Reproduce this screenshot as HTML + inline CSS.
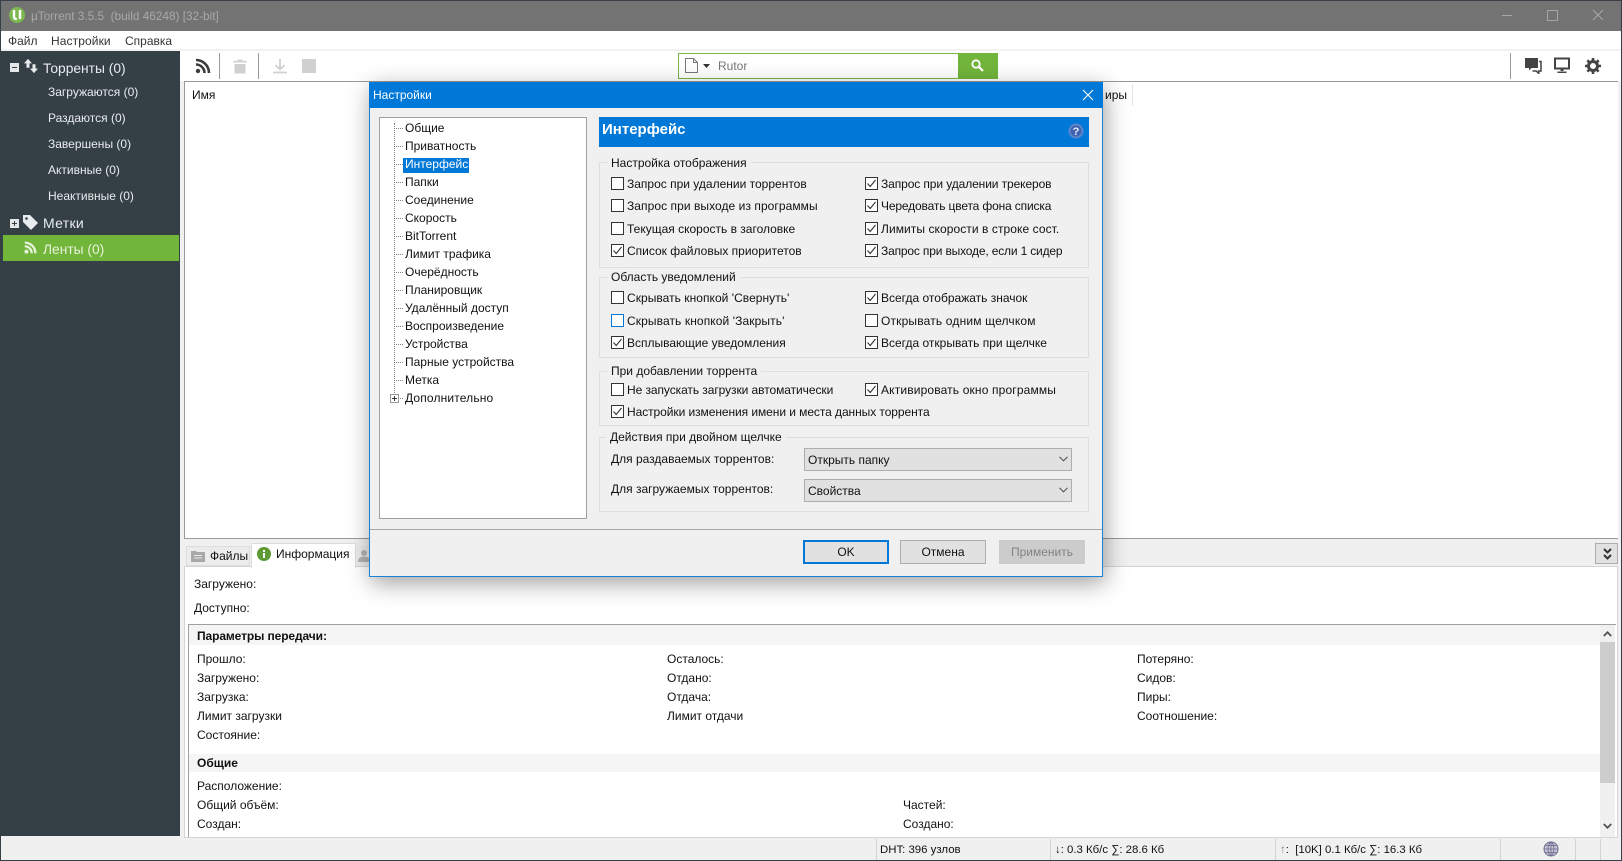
<!DOCTYPE html>
<html lang="ru"><head><meta charset="utf-8"><title>µTorrent</title>
<style>
html,body{margin:0;padding:0;width:1622px;height:861px;overflow:hidden;background:#f0f0f0}
body{position:relative;font:12px/16px "Liberation Sans","DejaVu Sans",sans-serif;color:#111}
div,i,svg{position:absolute;display:block}
.t{position:absolute;white-space:nowrap;line-height:16px;font-style:normal}
.w{color:#e8ecee}
.b{font-weight:bold}
.g{position:absolute;left:599px;width:488px;border:1px solid #dedede}
.lg{position:absolute;background:#f0f0f0;padding:0 4px;white-space:nowrap;line-height:16px;left:7px;top:-8px}
.lu{top:-9px}
.cb{position:absolute;width:13px;height:13px;background:#fff;border:1px solid #333;box-sizing:border-box}
.cb svg{left:0;top:0}
.combo{position:absolute;left:804px;width:268px;height:23px;background:#e1e1e1;border:1px solid #adadad;box-sizing:border-box}
.btn{position:absolute;top:540px;height:24px;width:86px;text-align:center;line-height:22px;background:#e1e1e1;border:1px solid #adadad;box-sizing:border-box}
.dot{position:absolute;border-top:1px dotted #808080;width:9px;left:394px}
.st{font-size:11.4px}
</style></head><body>

<!-- window frame -->
<div style="left:0;top:0;width:1622px;height:861px;background:#f0f0f0"></div>
<div style="left:0;top:0;width:1622px;height:31px;background:#737373"></div>
<div style="left:0;top:0;width:1622px;height:1px;background:#3c4048"></div>
<div style="left:0;top:31px;width:1622px;height:19px;background:#fff"></div>
<div style="left:0;top:50px;width:1622px;height:31px;background:#fff"></div>
<div style="left:0;top:49px;width:1622px;height:2px;background:#f2f2f2"></div>

<!-- title bar -->
<svg style="left:8px;top:6px" width="18" height="18" viewBox="0 0 18 18"><circle cx="9" cy="9" r="8" fill="#7cb850"/><path d="M6 4v6.500c0 1.600 1 2.500 2.800 2.500M12 4v9" fill="none" stroke="#fff" stroke-width="2.400"/></svg>
<span class="t" style="left:31px;top:8px;color:#a9a9a9;font-size:11.8px">µTorrent 3.5.5&nbsp; (build 46248) [32-bit]</span>
<div style="left:1502px;top:15px;width:10px;height:1px;background:#a6a6a6"></div>
<div style="left:1547px;top:10px;width:9px;height:9px;border:1px solid #a6a6a6"></div>
<svg style="left:1592px;top:9px" width="12" height="12" viewBox="0 0 12 12"><path d="M1 1L11 11M11 1L1 11" stroke="#a6a6a6" stroke-width="1.100"/></svg>

<!-- menu -->
<span class="t" style="left:8px;top:33px;color:#333">Файл</span>
<span class="t" style="left:51px;top:33px;color:#333;letter-spacing:.1px">Настройки</span>
<span class="t" style="left:125px;top:33px;color:#333">Справка</span>

<!-- toolbar -->
<svg style="left:195px;top:58px" width="16" height="16" viewBox="0 0 16 16"><circle cx="3" cy="13" r="2.200" fill="#3c3c3c"/><path d="M1 6.500a8.500 8.500 0 0 1 8.500 8.500M1 2a13 13 0 0 1 13 13" fill="none" stroke="#3c3c3c" stroke-width="2.600"/></svg>
<div style="left:219px;top:53px;width:1px;height:26px;background:#999"></div>
<svg style="left:232px;top:58px" width="16" height="16" viewBox="0 0 16 16"><path d="M1 3h14v1.500H1zM5.500 1.500h5V3h-5zM2.500 6h11v9.500h-11z" fill="#d0d0d0"/></svg>
<div style="left:258px;top:53px;width:1px;height:26px;background:#999"></div>
<svg style="left:272px;top:58px" width="16" height="16" viewBox="0 0 16 16"><path d="M8 1v9M3.500 7L8 11.500 12.500 7M1 14.500h14" fill="none" stroke="#d0d0d0" stroke-width="1.800"/></svg>
<div style="left:302px;top:59px;width:14px;height:14px;background:#d0d0d0"></div>

<!-- search -->
<div style="left:678px;top:53px;width:279px;height:24px;background:#fff;border:1px solid #7ab648"></div>
<div style="left:958px;top:53px;width:40px;height:26px;background:#72b53b"></div>
<svg style="left:971px;top:59px" width="13" height="13" viewBox="0 0 13 13"><circle cx="5" cy="5" r="3.700" fill="none" stroke="#fff" stroke-width="1.800"/><path d="M7.800 7.800L12 12" stroke="#fff" stroke-width="2.200"/></svg>
<svg style="left:685px;top:58px" width="13" height="15" viewBox="0 0 13 15"><path d="M.5.500h8l4 4v10H.5zM8.500.500v4h4" fill="#fff" stroke="#777"/></svg>
<svg style="left:703px;top:64px" width="7" height="4" viewBox="0 0 7 4"><path d="M0 0h7L3.500 4z" fill="#333"/></svg>
<span class="t" style="left:718px;top:58px;color:#777">Rutor</span>

<div style="left:1510px;top:53px;width:1px;height:26px;background:#999"></div>
<svg style="left:1525px;top:58px" width="17" height="16" viewBox="0 0 17 16"><path d="M0 0h13v10H6.500L4 12.500V10H0z" fill="#444"/><path d="M14 3.500h2v9.500h-2.200v2.500L11.300 13H7.500" fill="none" stroke="#444" stroke-width="1.500"/></svg>
<svg style="left:1554px;top:57px" width="16" height="16" viewBox="0 0 16 16"><path d="M1 1.500h14v10H1z" fill="none" stroke="#444" stroke-width="2"/><path d="M6.500 12h3v2h-3zM3.500 14.500h9V16h-9z" fill="#444"/></svg>
<svg style="left:1585px;top:58px" width="16" height="16" viewBox="0 0 16 16"><circle cx="8" cy="8" r="4.500" fill="none" stroke="#444" stroke-width="3"/><path d="M8 0v16M0 8h16M2.300 2.300l11.400 11.400M13.700 2.300L2.300 13.700" stroke="#444" stroke-width="2.600" stroke-dasharray="2.800 10.400 2.800"/></svg>

<!-- sidebar -->
<div style="left:0;top:51px;width:180px;height:785px;background:#343f46"></div>
<div style="left:0;top:0;width:1px;height:861px;background:#343f46"></div>
<div style="left:3px;top:235px;width:176px;height:26px;background:#72b53b"></div>
<div style="left:10px;top:63px;width:9px;height:9px;background:#e4e7e8"></div>
<div style="left:12px;top:67px;width:5px;height:1px;background:#343f46"></div>
<svg style="left:23px;top:58px" width="16" height="16" viewBox="0 0 16 18" preserveAspectRatio="none"><path d="M5 1l4 5H6.500v5h-3V6H1zM11 17l-4-5h2.500V7h3v5H15z" fill="#e8ecee"/></svg>
<span class="t w" style="left:43px;top:61px;font-size:13.800px">Торренты (0)</span>
<span class="t w" style="left:48px;top:84px">Загружаются (0)</span>
<span class="t w" style="left:48px;top:110px">Раздаются (0)</span>
<span class="t w" style="left:48px;top:136px">Завершены (0)</span>
<span class="t w" style="left:48px;top:162px">Активные (0)</span>
<span class="t w" style="left:48px;top:188px">Неактивные (0)</span>
<div style="left:10px;top:219px;width:9px;height:9px;background:#e4e7e8"></div>
<div style="left:12px;top:223px;width:5px;height:1px;background:#343f46"></div>
<div style="left:14px;top:221px;width:1px;height:5px;background:#343f46"></div>
<svg style="left:22px;top:214px" width="17" height="17" viewBox="0 0 17 17"><path d="M1 1h7l8 8-7 7-8-8z" fill="#e8ecee"/><circle cx="4.500" cy="4.500" r="1.300" fill="#343f46"/></svg>
<span class="t w" style="left:43px;top:215px;font-size:14px;letter-spacing:.3px">Метки</span>
<svg style="left:24px;top:241px" width="13" height="13" viewBox="0 0 16 16"><circle cx="3" cy="13" r="2.400" fill="#e8f3dc"/><path d="M1 6.500a8.500 8.500 0 0 1 8.500 8.500M1 2a13 13 0 0 1 13 13" fill="none" stroke="#e8f3dc" stroke-width="2.800"/></svg>
<span class="t" style="left:43px;top:242px;font-size:13.800px;color:#e8f3dc">Ленты (0)</span>

<!-- list -->
<div style="left:184px;top:81px;width:1434px;height:458px;background:#fff;border-top:1px solid #999;border-left:1px solid #999;border-bottom:1px solid #999;box-sizing:border-box"></div>
<span class="t" style="left:192px;top:87px">Имя</span>
<span class="t" style="left:1105px;top:87px">иры</span>
<div style="left:1132px;top:84px;width:1px;height:22px;background:#e4e4e4"></div>

<!-- tabs -->
<div style="left:186px;top:546px;width:64px;height:20px;background:#ececec;border:1px solid #ddd;box-sizing:border-box"></div>
<svg style="left:191px;top:549px" width="14" height="13" viewBox="0 0 14 13"><path d="M0 2h5l1 1h8v10H0z" fill="#a8a8a8"/><path d="M3 6.500h8M3 9h8" stroke="#e8e8e8"/></svg>
<span class="t" style="left:210px;top:548px">Файлы</span>
<div style="left:251px;top:543px;width:105px;height:25px;background:#fff;border:1px solid #ddd;border-bottom:none;box-sizing:border-box;z-index:2"></div>
<svg style="left:257px;top:547px;z-index:3" width="14" height="14" viewBox="0 0 14 14"><circle cx="7" cy="7" r="7" fill="#5b9a35"/><path d="M6 3h2v2H6zM6 6h2v5H6z" fill="#fff"/></svg>
<span class="t" style="left:276px;top:546px;z-index:3">Информация</span>
<div style="left:356px;top:546px;width:20px;height:20px;background:#ececec"></div>
<svg style="left:358px;top:549px" width="12" height="13" viewBox="0 0 12 13"><circle cx="6" cy="4" r="3" fill="#b4b4b4"/><path d="M0 13c0-4 2.500-5.500 6-5.500s6 1.500 6 5.500z" fill="#b4b4b4"/></svg>
<div style="left:1595px;top:543px;width:23px;height:21px;background:#e1e1e1;border:1px solid #adadad;box-sizing:border-box"></div>
<svg style="left:1603px;top:548px" width="10" height="12" viewBox="0 0 10 12"><path d="M1 1l3.500 3.500L8 1M1 7l3.500 3.500L8 7" fill="none" stroke="#333" stroke-width="2"/></svg>

<!-- info pane -->
<div style="left:184px;top:566px;width:1434px;height:272px;background:#fff;border:1px solid #d4d4d4;box-sizing:border-box"></div>
<span class="t" style="left:194px;top:576px">Загружено:</span>
<span class="t" style="left:194px;top:600px">Доступно:</span>
<div style="left:188px;top:624px;width:1428px;height:1px;background:#a0a0a0"></div>
<div style="left:188px;top:624px;width:1px;height:213px;background:#a0a0a0"></div>
<div style="left:189px;top:625px;width:1411px;height:20px;background:#f5f5f5"></div>
<div style="left:189px;top:754px;width:1411px;height:18px;background:#f5f5f5"></div>
<span class="t b" style="left:197px;top:628px;letter-spacing:-.1px">Параметры передачи:</span>
<span class="t" style="left:197px;top:651px">Прошло:</span>
<span class="t" style="left:197px;top:670px">Загружено:</span>
<span class="t" style="left:197px;top:689px">Загрузка:</span>
<span class="t" style="left:197px;top:708px">Лимит загрузки</span>
<span class="t" style="left:197px;top:727px">Состояние:</span>
<span class="t" style="left:667px;top:651px">Осталось:</span>
<span class="t" style="left:667px;top:670px">Отдано:</span>
<span class="t" style="left:667px;top:689px">Отдача:</span>
<span class="t" style="left:667px;top:708px">Лимит отдачи</span>
<span class="t" style="left:1137px;top:651px">Потеряно:</span>
<span class="t" style="left:1137px;top:670px">Сидов:</span>
<span class="t" style="left:1137px;top:689px">Пиры:</span>
<span class="t" style="left:1137px;top:708px">Соотношение:</span>
<span class="t b" style="left:197px;top:755px">Общие</span>
<span class="t" style="left:197px;top:778px">Расположение:</span>
<span class="t" style="left:197px;top:797px">Общий объём:</span>
<span class="t" style="left:197px;top:816px">Создан:</span>
<span class="t" style="left:903px;top:797px">Частей:</span>
<span class="t" style="left:903px;top:816px">Создано:</span>
<div style="left:1600px;top:625px;width:15px;height:212px;background:#f0f0f0"></div>
<div style="left:1600px;top:642px;width:15px;height:141px;background:#cdcdcd"></div>
<svg style="left:1603px;top:631px" width="9" height="6" viewBox="0 0 9 6"><path d="M.8 5L4.500 1.300 8.200 5" fill="none" stroke="#505050" stroke-width="1.800"/></svg>
<svg style="left:1603px;top:823px" width="9" height="6" viewBox="0 0 9 6"><path d="M.8 1L4.500 4.700 8.200 1" fill="none" stroke="#505050" stroke-width="1.800"/></svg>

<!-- status bar -->
<div style="left:0;top:860px;width:1622px;height:1px;background:#343f46"></div>
<div style="left:1621px;top:0;width:1px;height:861px;background:#343f46"></div>
<div style="left:876px;top:839px;width:1px;height:21px;background:#d4d4d4"></div>
<div style="left:1050px;top:839px;width:1px;height:21px;background:#d4d4d4"></div>
<div style="left:1275px;top:839px;width:1px;height:21px;background:#d4d4d4"></div>
<div style="left:1500px;top:839px;width:1px;height:21px;background:#d4d4d4"></div>
<div style="left:1575px;top:839px;width:1px;height:21px;background:#d4d4d4"></div>
<div style="left:1600px;top:839px;width:1px;height:21px;background:#d4d4d4"></div>
<span class="t st" style="left:880px;top:842px">DHT: 396 узлов</span>
<span class="t st" style="left:1055px;top:842px">↓: 0.3 Кб/с ∑: 28.6 Кб</span>
<span class="t st" style="left:1280px;top:842px"><span style="color:#888">↑</span>:&nbsp; [10K] 0.1 Кб/с ∑: 16.3 Кб</span>
<svg style="left:1543px;top:841px" width="16" height="16" viewBox="0 0 16 16"><circle cx="8" cy="8" r="7" fill="#c5c5d5" stroke="#6a6a90"/><path d="M8 1v14M1 8h14M2 4.500h12M2 11.500h12M8 1c-4 3-4 11 0 14M8 1c4 3 4 11 0 14" fill="none" stroke="#6a6a90" stroke-width=".8"/></svg>

<!-- dialog -->
<div style="left:369px;top:82px;width:734px;height:495px;background:#f0f0f0;border:1px solid #1883d7;box-sizing:border-box;box-shadow:2px 6px 22px rgba(0,0,0,.38);z-index:10">
</div>
<div style="left:0;top:0;width:1622px;height:861px;z-index:11" id="d">
<div style="left:369px;top:82px;width:734px;height:26px;background:#0078d7"></div>
<span class="t" style="left:373px;top:87px;color:#fff">Настройки</span>
<svg style="left:1082px;top:89px" width="12" height="12" viewBox="0 0 12 12"><path d="M1 1L11 11M11 1L1 11" stroke="#fff" stroke-width="1.100"/></svg>

<!-- tree -->
<div style="left:379px;top:117px;width:208px;height:402px;background:#fff;border:1px solid #a0a0a0;box-sizing:border-box"></div>
<div style="left:394px;top:123px;height:272px;border-left:1px dotted #808080"></div>
<div class="dot" style="top:128px"></div><span class="t" style="left:405px;top:120px">Общие</span>
<div class="dot" style="top:146px"></div><span class="t" style="left:405px;top:138px">Приватность</span>
<div class="dot" style="top:164px"></div>
<div style="left:403px;top:158px;width:66px;height:15px;background:#0078d7"></div><span class="t" style="left:405px;top:156px;color:#fff">Интерфейс</span>
<div class="dot" style="top:182px"></div><span class="t" style="left:405px;top:174px">Папки</span>
<div class="dot" style="top:200px"></div><span class="t" style="left:405px;top:192px">Соединение</span>
<div class="dot" style="top:218px"></div><span class="t" style="left:405px;top:210px">Скорость</span>
<div class="dot" style="top:236px"></div><span class="t" style="left:405px;top:228px">BitTorrent</span>
<div class="dot" style="top:254px"></div><span class="t" style="left:405px;top:246px">Лимит трафика</span>
<div class="dot" style="top:272px"></div><span class="t" style="left:405px;top:264px">Очерёдность</span>
<div class="dot" style="top:290px"></div><span class="t" style="left:405px;top:282px">Планировщик</span>
<div class="dot" style="top:308px"></div><span class="t" style="left:405px;top:300px">Удалённый доступ</span>
<div class="dot" style="top:326px"></div><span class="t" style="left:405px;top:318px">Воспроизведение</span>
<div class="dot" style="top:344px"></div><span class="t" style="left:405px;top:336px">Устройства</span>
<div class="dot" style="top:362px"></div><span class="t" style="left:405px;top:354px">Парные устройства</span>
<div class="dot" style="top:380px"></div><span class="t" style="left:405px;top:372px">Метка</span>
<div class="dot" style="top:398px"></div><span class="t" style="left:405px;top:390px;letter-spacing:.15px">Дополнительно</span>
<div style="left:390px;top:394px;width:7px;height:7px;background:#fff;border:1px solid #999"></div>
<div style="left:392px;top:398px;width:5px;height:1px;background:#333"></div>
<div style="left:394px;top:396px;width:1px;height:5px;background:#333"></div>

<!-- header -->
<div style="left:599px;top:117px;width:490px;height:30px;background:#0078d7"></div>
<span class="t b" style="left:602px;top:122px;color:#fff;font-size:15px">Интерфейс</span>
<svg style="left:1068px;top:123px" width="16" height="16" viewBox="0 0 16 16"><circle cx="8" cy="8" r="7.500" fill="#5d86c8"/><circle cx="8" cy="8" r="5.500" fill="#3f63b0"/><text x="8" y="12" text-anchor="middle" font-family="Liberation Sans" font-weight="bold" font-size="11" fill="#e6ecf8">?</text></svg>

<!-- group 1 -->
<div class="g" style="top:162px;height:104px"><span class="lg">Настройка отображения</span></div>
<div class="cb" style="left:611px;top:177px"></div><span class="t" style="left:627px;top:176px">Запрос при удалении торрентов</span>
<div class="cb" style="left:611px;top:199px"></div><span class="t" style="left:627px;top:198px;letter-spacing:.06px">Запрос при выходе из программы</span>
<div class="cb" style="left:611px;top:222px"></div><span class="t" style="left:627px;top:221px">Текущая скорость в заголовке</span>
<div class="cb" style="left:611px;top:244px"><svg width="11" height="11" viewBox="0 0 11 11"><path d="M1.500 5.500L4.200 8.500 9.500 2" fill="none" stroke="#333" stroke-width="1.100"/></svg></div><span class="t" style="left:627px;top:243px">Список файловых приоритетов</span>
<div class="cb" style="left:865px;top:177px"><svg width="11" height="11" viewBox="0 0 11 11"><path d="M1.500 5.500L4.200 8.500 9.500 2" fill="none" stroke="#333" stroke-width="1.100"/></svg></div><span class="t" style="left:881px;top:176px;letter-spacing:-.1px">Запрос при удалении трекеров</span>
<div class="cb" style="left:865px;top:199px"><svg width="11" height="11" viewBox="0 0 11 11"><path d="M1.500 5.500L4.200 8.500 9.500 2" fill="none" stroke="#333" stroke-width="1.100"/></svg></div><span class="t" style="left:881px;top:198px;letter-spacing:-.15px">Чередовать цвета фона списка</span>
<div class="cb" style="left:865px;top:222px"><svg width="11" height="11" viewBox="0 0 11 11"><path d="M1.500 5.500L4.200 8.500 9.500 2" fill="none" stroke="#333" stroke-width="1.100"/></svg></div><span class="t" style="left:881px;top:221px;letter-spacing:.07px">Лимиты скорости в строке сост.</span>
<div class="cb" style="left:865px;top:244px"><svg width="11" height="11" viewBox="0 0 11 11"><path d="M1.500 5.500L4.200 8.500 9.500 2" fill="none" stroke="#333" stroke-width="1.100"/></svg></div><span class="t" style="left:881px;top:243px;letter-spacing:-.17px">Запрос при выходе, если 1 сидер</span>

<!-- group 2 -->
<div class="g" style="top:277px;height:79px"><span class="lg lu">Область уведомлений</span></div>
<div class="cb" style="left:611px;top:291px"></div><span class="t" style="left:627px;top:290px;letter-spacing:.04px">Скрывать кнопкой 'Свернуть'</span>
<div class="cb" style="left:611px;top:314px;border-color:#0078d7"></div><span class="t" style="left:627px;top:313px;letter-spacing:.1px">Скрывать кнопкой 'Закрыть'</span>
<div class="cb" style="left:611px;top:336px"><svg width="11" height="11" viewBox="0 0 11 11"><path d="M1.500 5.500L4.200 8.500 9.500 2" fill="none" stroke="#333" stroke-width="1.100"/></svg></div><span class="t" style="left:627px;top:335px">Всплывающие уведомления</span>
<div class="cb" style="left:865px;top:291px"><svg width="11" height="11" viewBox="0 0 11 11"><path d="M1.500 5.500L4.200 8.500 9.500 2" fill="none" stroke="#333" stroke-width="1.100"/></svg></div><span class="t" style="left:881px;top:290px">Всегда отображать значок</span>
<div class="cb" style="left:865px;top:314px"></div><span class="t" style="left:881px;top:313px;letter-spacing:.17px">Открывать одним щелчком</span>
<div class="cb" style="left:865px;top:336px"><svg width="11" height="11" viewBox="0 0 11 11"><path d="M1.500 5.500L4.200 8.500 9.500 2" fill="none" stroke="#333" stroke-width="1.100"/></svg></div><span class="t" style="left:881px;top:335px">Всегда открывать при щелчке</span>

<!-- group 3 -->
<div class="g" style="top:371px;height:53px"><span class="lg lu">При добавлении торрента</span></div>
<div class="cb" style="left:611px;top:383px"></div><span class="t" style="left:627px;top:382px;letter-spacing:-.07px">Не запускать загрузки автоматически</span>
<div class="cb" style="left:865px;top:383px"><svg width="11" height="11" viewBox="0 0 11 11"><path d="M1.500 5.500L4.200 8.500 9.500 2" fill="none" stroke="#333" stroke-width="1.100"/></svg></div><span class="t" style="left:881px;top:382px;letter-spacing:.15px">Активировать окно программы</span>
<div class="cb" style="left:611px;top:405px"><svg width="11" height="11" viewBox="0 0 11 11"><path d="M1.500 5.500L4.200 8.500 9.500 2" fill="none" stroke="#333" stroke-width="1.100"/></svg></div><span class="t" style="left:627px;top:404px;letter-spacing:-.07px">Настройки изменения имени и места данных торрента</span>

<!-- group 4 -->
<div class="g" style="top:437px;height:73px"><span class="lg lu" style="left:6px">Действия при двойном щелчке</span></div>
<span class="t" style="left:611px;top:451px">Для раздаваемых торрентов:</span>
<span class="t" style="left:611px;top:481px">Для загружаемых торрентов:</span>
<div class="combo" style="top:448px"><span class="t" style="left:3px;top:3px">Открыть папку</span><svg style="left:254px;top:7px" width="9" height="6" viewBox="0 0 9 6"><path d="M.5 .8L4.500 4.800 8.500 .8" fill="none" stroke="#444"/></svg></div>
<div class="combo" style="top:479px"><span class="t" style="left:3px;top:3px">Свойства</span><svg style="left:254px;top:7px" width="9" height="6" viewBox="0 0 9 6"><path d="M.5 .8L4.500 4.800 8.500 .8" fill="none" stroke="#444"/></svg></div>

<!-- footer -->
<div style="left:370px;top:529px;width:732px;height:1px;background:#a8a8a8"></div>
<div class="btn" style="left:803px;border:2px solid #0078d7;line-height:20px">OK</div>
<div class="btn" style="left:900px">Отмена</div>
<div class="btn" style="left:999px;background:#ccc;border-color:#ccc;color:#838383">Применить</div>
</div>
</body></html>
